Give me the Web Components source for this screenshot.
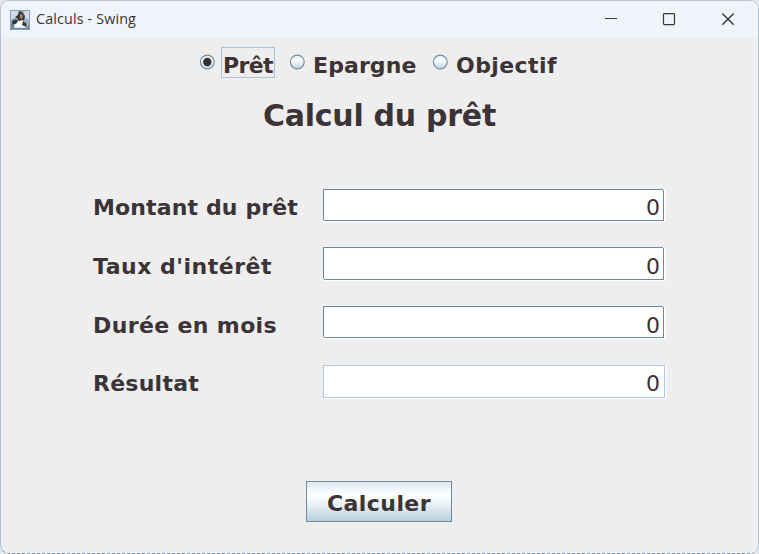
<!DOCTYPE html>
<html lang="fr"><head><meta charset="utf-8"><title>Calculs - Swing</title>
<style>html,body{margin:0;height:100%;overflow:hidden;background:#e3e8ec}</style></head><body>
<swing-window caption="Calculs - Swing">
  <radio-bar>
    <swing-radio checked style="--gap:6px" w="50">Prêt</swing-radio>
    <swing-radio style="--gap:6px;margin-left:14px" w="103.5">Epargne</swing-radio>
    <swing-radio style="--gap:6px;margin-left:13.5px" w="101">Objectif</swing-radio>
  </radio-bar>
  <form-title><fit-text w="233">Calcul du prêt</fit-text></form-title>
  <form-grid>
    <form-row w="205" label="Montant du prêt" value="0" style="--h:32px"></form-row>
    <form-row w="179" label="Taux d'intérêt" value="0" style="--top:-1px;--pad:8px"></form-row>
    <form-row w="184" label="Durée en mois" value="0" style="height:58px;--top:-1px;--h:32px;--pad:8px"></form-row>
    <form-row w="106" label="Résultat" value="0" readonly></form-row>
  </form-grid>
  <swing-button><fit-text w="104">Calculer</fit-text></swing-button>
</swing-window>
<script>
const define=(name,html,setup)=>customElements.define(name,class extends HTMLElement{
  connectedCallback(){
    if(this.shadowRoot)return;
    const root=this.attachShadow({mode:'open'});
    root.innerHTML=html;
    if(setup)setup(this,root);
  }
});
const makeFit=(w,text)=>{
  const fit=document.createElement('fit-text');
  fit.setAttribute('w',w);
  fit.textContent=text;
  return fit;
};
// Text set to a given advance width by adjusting its tracking.
define('fit-text',`<style>:host{display:block;white-space:nowrap;line-height:1}span{display:inline-block}</style><span><slot></slot></span>`,(el,root)=>{
  const span=root.querySelector('span'),w=+el.getAttribute('w');
  el.style.width=w+'px';
  requestAnimationFrame(()=>{
    const n=el.textContent.length;
    span.style.letterSpacing=((w-span.getBoundingClientRect().width)/n)+'px';
  });
});
define('app-icon',`<style>:host{display:block;width:20px;height:20px}svg{display:block}</style>
<svg width="20" height="20" viewBox="0 0 20 20"><rect width="20" height="20" fill="#9fb4c4"/><path d="M1 1h8L7 7 1 9zM14 1h5v9l-4-2z" fill="#cfdce6"/><path d="M0 15l5-2 3 3 6 1 6-3v6H0z" fill="#6d8799"/><path d="M9 1l3 1 3 4-1 5-3 2-4-1 1-3-3-2 3-2z" fill="#37343a"/><path d="M10 4l3 1-1 4-2-1z" fill="#b9824c"/><path d="M6 9l2 2 5-1 2 4 3 1-2 2H5l-2-3z" fill="#f6f9fb"/><path d="M2 11l4-2 2 2-2 3-4 1zM13 11l4 3-1 3-4-2z" fill="#333b44"/><path d="M4 17h12v1H4z" fill="#d5e1e9"/><path d="M.5.5h19v19H.5z" fill="none" stroke="#869eb0"/></svg>`);
define('title-bar',`<style>
:host{display:flex;height:37px;background:#eff3fa;align-items:center;padding-left:9px;font:14.3px/20px "Open Sans",sans-serif;color:#3a3536}
fit-text{margin-left:6px}
.controls{margin-left:auto;display:flex}
svg{display:block}</style>
<app-icon></app-icon>
<div class="controls"><svg width="155" height="37" viewBox="603 1 155 37" fill="none" stroke="#3b3638" stroke-width="1.2"><path d="M605 18.5h12"/><rect x="663.5" y="13.6" width="11" height="11" rx="1"/><path d="M722.3 13.5l11.4 11.2m0-11.2l-11.4 11.2" stroke-width="1.4"/></svg></div>`,
(el,root)=>root.querySelector('app-icon').after(makeFit(100,el.getAttribute('caption'))));
define('swing-window',`<style>
:host{display:flex;flex-direction:column;box-sizing:border-box;width:759px;height:554px;border:1px solid #b3c5d4;border-bottom:1px dashed #8295a5;border-radius:9px;overflow:hidden;background:#eee;font:bold 22px/1 "DejaVu Sans",sans-serif;color:#3b3335}</style>
<slot></slot>`,(el,root)=>{
  const bar=document.createElement('title-bar');
  bar.setAttribute('caption',el.getAttribute('caption'));
  root.querySelector('slot').before(bar);
});
define('radio-bar',`<style>:host{display:flex;height:31px;margin:9px 0 0 198px}</style><slot></slot>`);
define('swing-radio',`<style>
:host{display:flex;gap:var(--gap);height:31px}
svg{display:block;margin-top:7px}
.label{box-sizing:border-box;height:31px;padding:7px 1px 0;border:1px solid transparent}
:host([checked]) .label{border-color:#adc2d3}</style>
<svg width="16" height="16" viewBox="0 0 16 16"><defs><linearGradient id="g" x2="0" y2="1"><stop stop-color="#d9e6ef"/><stop offset=".35" stop-color="#fff"/><stop offset="1" stop-color="#bdd2e0"/></linearGradient></defs><circle cx="8.3" cy="8" r="6.9" fill="url(#g)" stroke="#748da2" stroke-width="1.2"/><circle class="dot" cx="8.3" cy="8" r="4.2" fill="#332f32"/></svg>
<div class="label"></div>`,(el,root)=>{
  if(!el.hasAttribute('checked'))root.querySelector('.dot').remove();
  root.querySelector('.label').append(makeFit(el.getAttribute('w'),el.textContent));
});
define('form-title',`<style>:host{display:block;font-size:30px;margin:23px 0 0 262px;height:31px}</style><slot></slot>`);
define('form-grid',`<style>:host{display:flex;flex-direction:column;margin:57px 0 0 92px}</style><slot></slot>`);
define('form-row',`<style>
:host{display:grid;grid-template-columns:230px 343px;height:59px;align-items:start}
fit-text{margin-top:8px}
.field{position:relative;box-sizing:border-box;height:var(--h,33px);width:341px;margin-top:var(--top,0);background:#fff;border:1px solid #748799;box-shadow:1px 1px 0 #fff,2px 1px 0 #f8f8f8;text-align:right;padding:var(--pad,7px) 3px 0 0;font-weight:normal}
.field::before,.field::after{content:"";position:absolute;width:1px;height:1px;background:#fff}
.field::before{top:-1px;right:-1px}.field::after{bottom:-1px;left:-1px}
:host([readonly]) .field{border-color:#b3c6d5;width:342px;padding-right:4px}
:host([readonly]) .field::before,:host([readonly]) .field::after{display:none}</style>
<div class="field"></div>`,(el,root)=>{
  const field=root.querySelector('.field');
  field.before(makeFit(el.getAttribute('w'),el.getAttribute('label')));
  field.textContent=el.getAttribute('value');
});
define('swing-button',`<style>
:host{display:block;box-sizing:border-box;width:146px;height:41px;margin:57px 0 0 305px;border:1px solid #72879a;padding:11px 0 0 20px;background:linear-gradient(#dce9f2,#fff 32%,#fafcfe 42%,#dce8f0 68%,#b9d0de)}</style><slot></slot>`);
</script></body></html>
